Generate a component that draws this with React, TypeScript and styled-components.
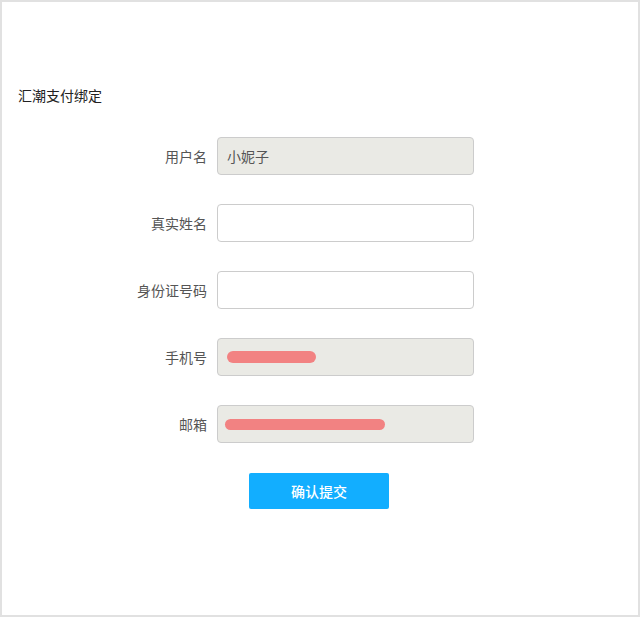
import React from "react";
import styled, { createGlobalStyle } from "styled-components";

const Global = createGlobalStyle`
  html, body { margin: 0; padding: 0; background: #fff; }
  body { font-family: "Microsoft YaHei", "Noto Sans CJK SC", "Liberation Sans", sans-serif; }
  * { box-sizing: border-box; }
`;

const Frame = styled.div`
  width: 640px;
  height: 617px;
  border: 2px solid #e1e1e1;
  padding: 84px 0 0 16px;
`;

const Title = styled.div`
  font-size: 14px;
  color: #222;
  line-height: 18px;
`;

const Form = styled.div`
  margin-top: 33px;
  display: flex;
  flex-direction: column;
  gap: 29px;
`;

const Row = styled.div`
  display: grid;
  grid-template-columns: 189px 257px;
  column-gap: 10px;
  align-items: center;
`;

const Label = styled.div`
  text-align: right;
  font-size: 14px;
  color: #555;
`;

const Field = styled.div<{ $readonly?: boolean }>`
  position: relative;
  height: 38px;
  border: 1px solid #ccc;
  border-radius: 4px;
  background: ${(p) => (p.$readonly ? "#eaeae5" : "#fff")};
  display: flex;
  align-items: center;
  padding-left: 9px;
  font-size: 14px;
  color: #555;
`;

const Scribble = styled.div<{ $w: number; $h: number }>`
  width: ${(p) => p.$w}px;
  height: ${(p) => p.$h}px;
  border-radius: ${(p) => p.$h / 2}px;
  background: #f28282;
`;

const Actions = styled.div`
  padding-left: 231px;
  margin-top: 1px;
`;

const Button = styled.button`
  width: 140px;
  height: 36px;
  border: none;
  border-radius: 2px;
  background: #12aeff;
  color: #fff;
  font-family: inherit;
  font-size: 14px;
  font-weight: 500;
  cursor: pointer;
`;

export default function App() {
  return (
    <>
      <Global />
      <Frame>
        <Title>汇潮支付绑定</Title>
        <Form>
          <Row>
            <Label>用户名</Label>
            <Field $readonly>小妮子</Field>
          </Row>
          <Row>
            <Label>真实姓名</Label>
            <Field />
          </Row>
          <Row>
            <Label>身份证号码</Label>
            <Field />
          </Row>
          <Row>
            <Label>手机号</Label>
            <Field $readonly>
              <Scribble $w={89} $h={12} />
            </Field>
          </Row>
          <Row>
            <Label>邮箱</Label>
            <Field $readonly style={{ paddingLeft: 7 }}>
              <Scribble $w={160} $h={11} />
            </Field>
          </Row>
          <Actions>
            <Button>确认提交</Button>
          </Actions>
        </Form>
      </Frame>
    </>
  );
}
